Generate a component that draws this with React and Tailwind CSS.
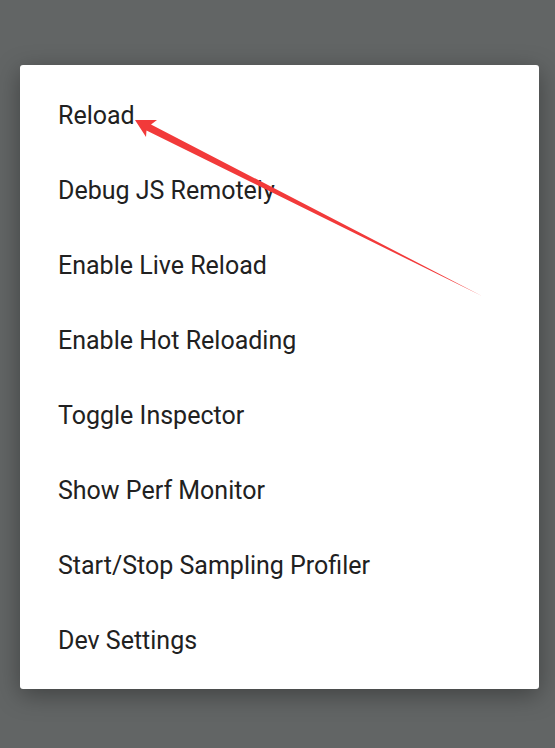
export default function App() {
  const items = [
    "Reload",
    "Debug JS Remotely",
    "Enable Live Reload",
    "Enable Hot Reloading",
    "Toggle Inspector",
    "Show Perf Monitor",
    "Start/Stop Sampling Profiler",
    "Dev Settings",
  ];
  return (
    <div className="relative w-[555px] h-[748px] bg-[#626565] overflow-hidden pt-[65px] pl-[20px]" style={{ fontFamily: "Roboto, 'Noto Sans', sans-serif" }}>
      <div className="w-[519px] bg-white rounded-[3px] pt-[13px] pb-[11px] shadow-[0_6px_24px_rgba(0,0,0,0.35)]">
        {items.map((t) => (
          <div key={t} className="h-[75px] flex items-center pl-[38px] text-[25px] text-[#212121]">
            {t}
          </div>
        ))}
      </div>
      <svg className="absolute left-0 top-0" width="555" height="748" viewBox="0 0 555 748">
        <polygon points="135,120 157,120 151,124.5 482,296 146.5,130.5 146,137" fill="#f23a3a" />
      </svg>
    </div>
  );
}
